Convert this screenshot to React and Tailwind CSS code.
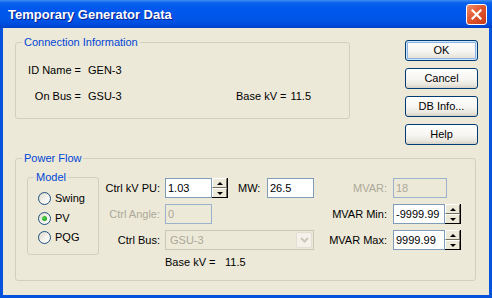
const face = "bg-[#ECE9D8]";

// group box with blue caption
function GroupBox({ label, className = "", children }) {
  return (
    <fieldset className={`rounded-[3px] border border-[#D0D0BF] ${className}`}>
      <legend className="ml-[6px] px-[2px] text-[11px] leading-[13px] text-[#0046D5]">
        {label}
      </legend>
      {children}
    </fieldset>
  );
}

function XpButton({ children, isDefault }) {
  return (
    <button
      className={`h-[21px] w-[73px] rounded-[3px] border border-[#003C74] bg-[linear-gradient(180deg,#FFFFFF_0%,#F6F5F1_55%,#E8E5DC_85%,#D6D0C5_100%)] text-[11px] leading-[13px] text-black ${
        isDefault ? "shadow-[inset_0_0_0_1px_#CEE7FF,inset_0_0_0_2px_#8DB2E3]" : ""
      }`}
    >
      {children}
    </button>
  );
}

function Field({ value, width, disabled }) {
  return (
    <div
      className={`flex h-[20px] items-center border pl-[2px] text-[11px] leading-[13px] ${width} ${
        disabled
          ? "border-[#9CB2CC] bg-[#ECE9D8] text-[#ACA899]"
          : "border-[#7F9DB9] bg-white text-black"
      }`}
    >
      {value}
    </div>
  );
}

function Arrow({ up }) {
  return (
    <div
      className={`h-0 w-0 border-x-[3px] border-x-transparent ${
        up ? "border-b-[3px] border-b-black" : "border-t-[3px] border-t-black"
      }`}
    />
  );
}

function Spin({ value, width }) {
  return (
    <div className="flex h-[20px]">
      <Field value={value} width={width} />
      <div className="flex w-[16px] flex-col border-r border-b border-black">
        <div className={`flex flex-1 items-center justify-center border-t border-l border-t-white border-l-white border-r border-b border-r-[#716F64] border-b-[#716F64] ${face}`}>
          <Arrow up />
        </div>
        <div className={`flex flex-1 items-center justify-center border-t border-l border-t-white border-l-white border-r border-r-[#716F64] ${face}`}>
          <Arrow />
        </div>
      </div>
    </div>
  );
}

function Radio({ label, checked }) {
  return (
    <div className="flex h-[19.5px] items-center">
      <div className="flex h-[13px] w-[13px] items-center justify-center rounded-full border border-[#1C5180] bg-[linear-gradient(135deg,#DCD7CB_0%,#F4F3EE_55%,#FFFFFF_100%)]">
        {checked && (
          <div className="h-[5px] w-[5px] rounded-full bg-[radial-gradient(circle_at_40%_40%,#55D855_0%,#21A121_70%)]" />
        )}
      </div>
      <span className="ml-[4px] text-[11px] leading-[13px]">{label}</span>
    </div>
  );
}

export default function App() {
  return (
    <div className="flex h-[298px] w-[492px] flex-col bg-[#0553DD] font-['Liberation_Sans',Arial,sans-serif] text-black">
      {/* title bar */}
      <div className="flex h-[28px] items-center justify-between bg-[linear-gradient(180deg,#3D8FF7_0%,#0B62EC_10%,#0058EE_30%,#0055E7_70%,#004ADA_90%,#0040C6_100%)] pl-[8px] pr-[5px]">
        <span className="pt-[1px] text-[13px] font-bold leading-[16px] text-white [text-shadow:1px_1px_0_#0A1E8C]">
          Temporary Generator Data
        </span>
        <div className="flex h-[21px] w-[21px] items-center justify-center rounded-[3px] border border-white bg-[linear-gradient(135deg,#F0906E_0%,#E2572F_45%,#C83A17_100%)]">
          <svg width="11" height="11" viewBox="0 0 11 11">
            <path d="M1.5 1.5 L9.5 9.5 M9.5 1.5 L1.5 9.5" stroke="white" strokeWidth="2.2" strokeLinecap="square" />
          </svg>
        </div>
      </div>

      {/* body */}
      <div className={`mx-[3px] mb-[3px] flex-1 pl-[12px] pt-[8px] text-[11px] leading-[13px] ${face}`}>
        <div className="flex items-start">
          <GroupBox label="Connection Information" className="h-[83px] w-[335px]">
            <div className="mt-[15px] flex flex-col gap-[13px]">
              <div className="flex">
                <span className="w-[65px] text-right">ID Name =</span>
                <span className="ml-[7px]">GEN-3</span>
              </div>
              <div className="flex">
                <span className="w-[65px] text-right">On Bus =</span>
                <span className="ml-[7px] w-[148px]">GSU-3</span>
                <span>Base kV =</span>
                <span className="ml-[4px]">11.5</span>
              </div>
            </div>
          </GroupBox>

          <div className="ml-[55px] mt-[4px] flex flex-col gap-[7px]">
            <XpButton isDefault>OK</XpButton>
            <XpButton>Cancel</XpButton>
            <XpButton>DB Info...</XpButton>
            <XpButton>Help</XpButton>
          </div>
        </div>

        <GroupBox label="Power Flow" className="mt-[7px] h-[129px] w-[461px]">
          <div className="flex items-start">
            <GroupBox label="Model" className="ml-[11px] mt-[6px] h-[84px] w-[72px]">
              <div className="mt-[5px] flex flex-col pl-[10px]">
                <Radio label="Swing" />
                <Radio label="PV" checked />
                <Radio label="PQG" />
              </div>
            </GroupBox>

            <div className="ml-[6px] mt-[13px] flex flex-col gap-[6px]">
              <div className="flex h-[20px] items-center">
                <span className="w-[55px] text-right">Ctrl kV PU:</span>
                <div className="ml-[5px]">
                  <Spin value="1.03" width="w-[47px]" />
                </div>
                <span className="ml-[10px] w-[29px]">MW:</span>
                <Field value="26.5" width="w-[47px]" />
                <span className="w-[73px] text-right text-[#ACA899]">MVAR:</span>
                <div className="ml-[6px]">
                  <Field value="18" width="w-[54px]" disabled />
                </div>
              </div>

              <div className="flex h-[20px] items-center">
                <span className="w-[55px] text-right text-[#ACA899]">Ctrl Angle:</span>
                <div className="ml-[5px]">
                  <Field value="0" width="w-[47px]" disabled />
                </div>
                <div className="w-[102px]" />
                <span className="w-[73px] text-right">MVAR Min:</span>
                <div className="ml-[6px]">
                  <Spin value="-9999.99" width="w-[52px]" />
                </div>
              </div>

              <div className="flex h-[20px] items-center">
                <span className="w-[55px] text-right">Ctrl Bus:</span>
                <div className="ml-[5px] flex h-[20px] w-[149px] items-center justify-between border border-[#CBC7B8] pl-[4px] text-[#ACA899]">
                  <span>GSU-3</span>
                  <div className="mr-[1px] flex h-[16px] w-[16px] items-center justify-center rounded-[2px] border border-[#E2DED2] bg-[#F3F1EA]">
                    <svg width="9" height="6" viewBox="0 0 9 6">
                      <path d="M1 1 L4.5 4.5 L8 1" fill="none" stroke="#C9C7BA" strokeWidth="2" />
                    </svg>
                  </div>
                </div>
                <span className="w-[73px] text-right">MVAR Max:</span>
                <div className="ml-[6px]">
                  <Spin value="9999.99" width="w-[52px]" />
                </div>
              </div>

              <div className="flex">
                <span className="ml-[60px] w-[60px]">Base kV =</span>
                <span>11.5</span>
              </div>
            </div>
          </div>
        </GroupBox>
      </div>
    </div>
  );
}
